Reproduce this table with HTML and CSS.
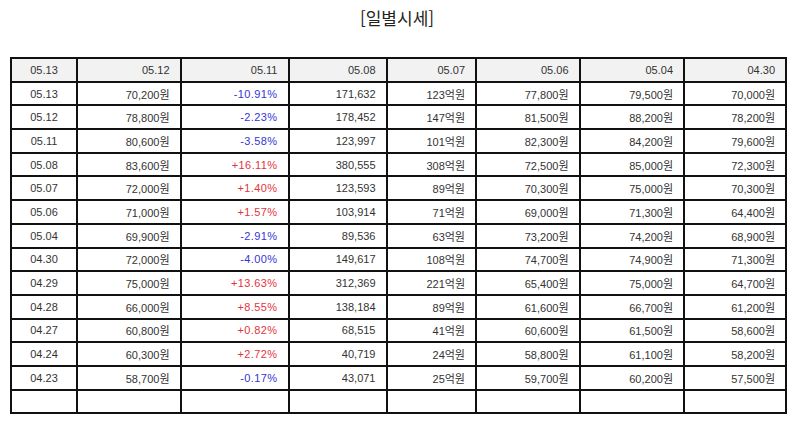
FILE: index.html
```html
<!DOCTYPE html>
<html lang="ko">
<head>
<meta charset="utf-8">
<title>일별시세</title>
<link rel="stylesheet" href="styles.css">
</head>
<body>
<div class="title">[일별시세]</div>
<table class="daily">
  <colgroup>
    <col class="c1"><col class="c2"><col class="c3"><col class="c4"><col class="c5"><col class="c6"><col class="c7"><col class="c8">
  </colgroup>
  <thead>
    <tr class="head">
      <th class="date">05.13</th><th>05.12</th><th>05.11</th><th>05.08</th><th>05.07</th><th>05.06</th><th>05.04</th><th>04.30</th>
    </tr>
  </thead>
  <tbody>
    <tr><td class="date">05.13</td><td>70,200원</td><td class="dn">-10.91%</td><td>171,632</td><td>123억원</td><td>77,800원</td><td>79,500원</td><td>70,000원</td></tr>
    <tr><td class="date">05.12</td><td>78,800원</td><td class="dn">-2.23%</td><td>178,452</td><td>147억원</td><td>81,500원</td><td>88,200원</td><td>78,200원</td></tr>
    <tr><td class="date">05.11</td><td>80,600원</td><td class="dn">-3.58%</td><td>123,997</td><td>101억원</td><td>82,300원</td><td>84,200원</td><td>79,600원</td></tr>
    <tr><td class="date">05.08</td><td>83,600원</td><td class="up">+16.11%</td><td>380,555</td><td>308억원</td><td>72,500원</td><td>85,000원</td><td>72,300원</td></tr>
    <tr><td class="date">05.07</td><td>72,000원</td><td class="up">+1.40%</td><td>123,593</td><td>89억원</td><td>70,300원</td><td>75,000원</td><td>70,300원</td></tr>
    <tr><td class="date">05.06</td><td>71,000원</td><td class="up">+1.57%</td><td>103,914</td><td>71억원</td><td>69,000원</td><td>71,300원</td><td>64,400원</td></tr>
    <tr><td class="date">05.04</td><td>69,900원</td><td class="dn">-2.91%</td><td>89,536</td><td>63억원</td><td>73,200원</td><td>74,200원</td><td>68,900원</td></tr>
    <tr><td class="date">04.30</td><td>72,000원</td><td class="dn">-4.00%</td><td>149,617</td><td>108억원</td><td>74,700원</td><td>74,900원</td><td>71,300원</td></tr>
    <tr><td class="date">04.29</td><td>75,000원</td><td class="up">+13.63%</td><td>312,369</td><td>221억원</td><td>65,400원</td><td>75,000원</td><td>64,700원</td></tr>
    <tr><td class="date">04.28</td><td>66,000원</td><td class="up">+8.55%</td><td>138,184</td><td>89억원</td><td>61,600원</td><td>66,700원</td><td>61,200원</td></tr>
    <tr><td class="date">04.27</td><td>60,800원</td><td class="up">+0.82%</td><td>68,515</td><td>41억원</td><td>60,600원</td><td>61,500원</td><td>58,600원</td></tr>
    <tr><td class="date">04.24</td><td>60,300원</td><td class="up">+2.72%</td><td>40,719</td><td>24억원</td><td>58,800원</td><td>61,100원</td><td>58,200원</td></tr>
    <tr><td class="date">04.23</td><td>58,700원</td><td class="dn">-0.17%</td><td>43,071</td><td>25억원</td><td>59,700원</td><td>60,200원</td><td>57,500원</td></tr>
    <tr><td class="date"></td><td></td><td></td><td></td><td></td><td></td><td></td><td></td></tr>
  </tbody>
</table>
</body>
</html>
```
FILE: styles.css
```css
html, body {
  margin: 0;
  padding: 0;
  background: #fff;
}
body {
  font-family: "Liberation Sans", "Noto Sans CJK KR", sans-serif;
  color: #333;
}
.title {
  margin-top: 8px;
  height: 20px;
  line-height: 20px;
  text-align: center;
  font-family: "Noto Sans CJK KR", "Liberation Sans", sans-serif;
  font-size: 17px;
  color: #222;
}
.daily {
  margin: 29px 0 0 10px;
  width: 775px;
  table-layout: fixed;
  border-collapse: separate;
  border-spacing: 0;
  border: 1px solid #111;
  font-size: 11px;
}
.c1 { width: 66px; }
.c2 { width: 103.5px; }
.c3 { width: 108px; }
.c4 { width: 98px; }
.c5 { width: 89.5px; }
.c6 { width: 103.5px; }
.c7 { width: 104.5px; }
.c8 { width: 102px; }
.daily tr {
  height: 23.7px;
}
.daily th,
.daily td {
  border: 1px solid #111;
  padding: 0 10px 0 0;
  text-align: right;
  font-weight: normal;
  white-space: nowrap;
  vertical-align: middle;
}
.daily .head th {
  background: #f2f2f2;
}
.daily .date {
  text-align: center;
  padding: 0;
}
.daily .up {
  color: #e5333d;
  letter-spacing: 0.4px;
}
.daily .dn {
  color: #3535d6;
  letter-spacing: 0.4px;
}
```
